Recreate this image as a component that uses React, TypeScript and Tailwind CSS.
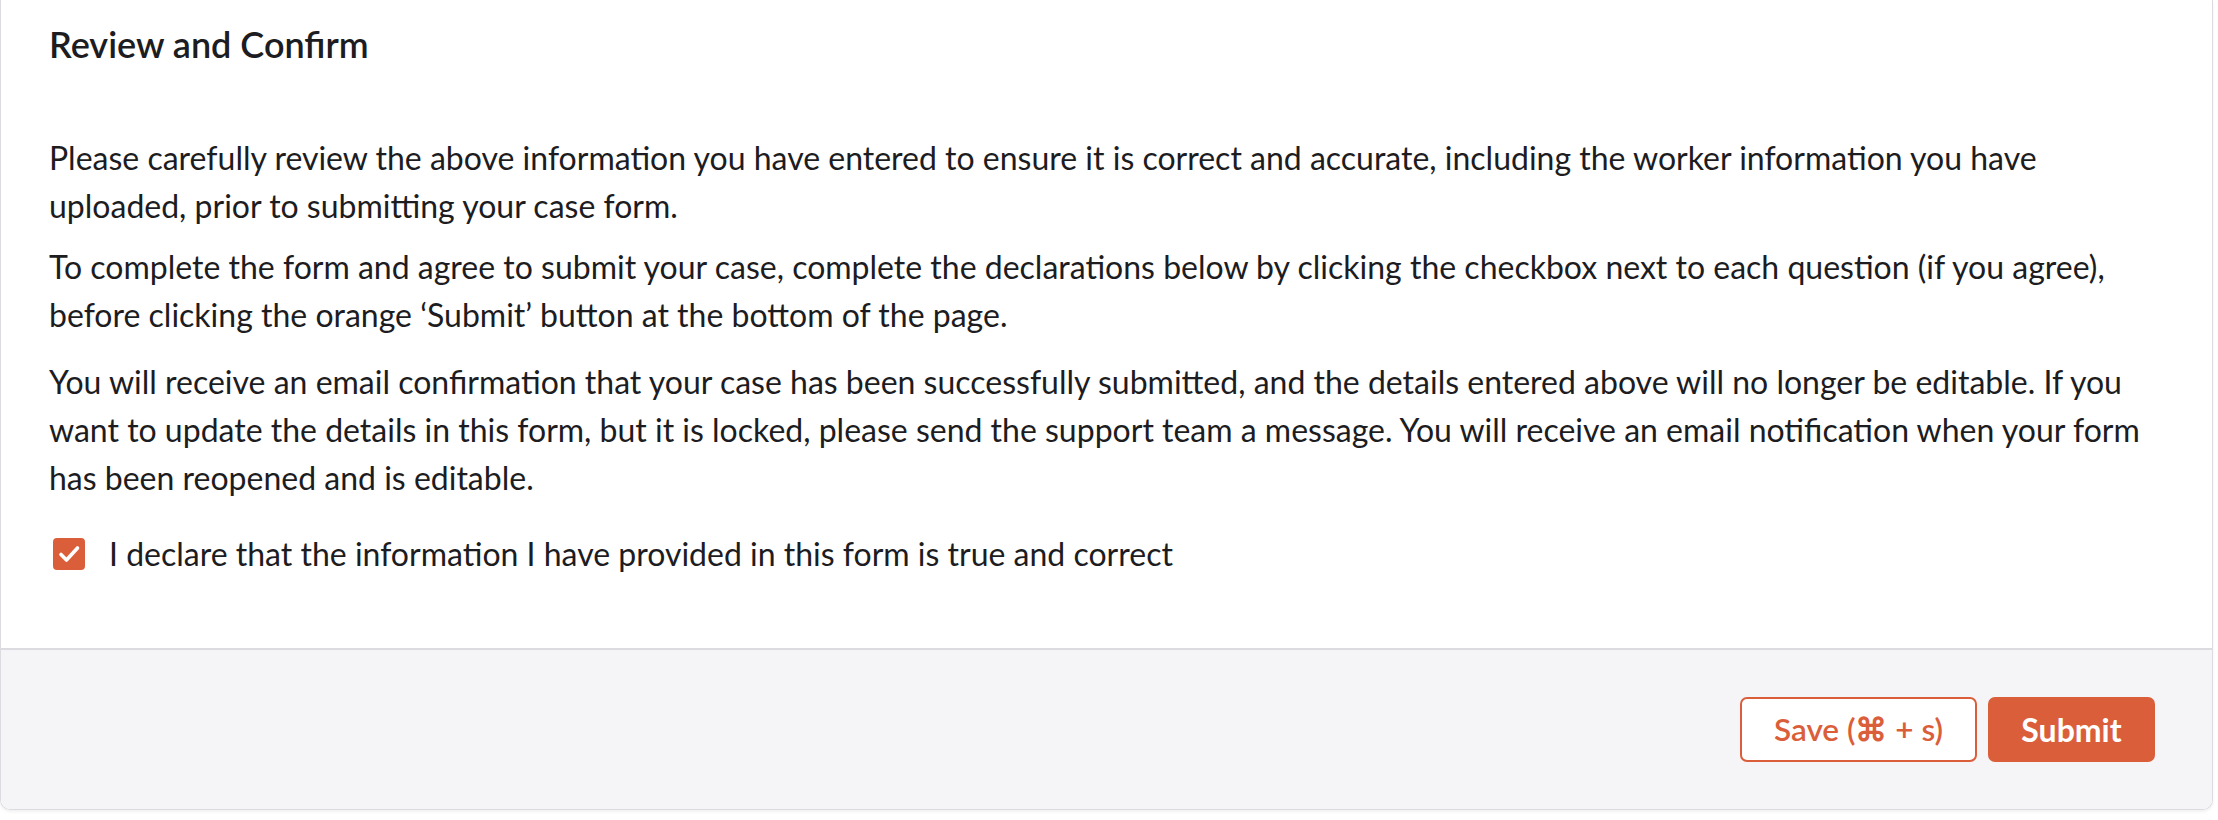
import React, { useState } from 'react';

export default function App() {
  const [agreed, setAgreed] = useState(true);

  return (
    <div className="min-h-screen bg-white font-['Lato','Noto_Sans',sans-serif] text-[#1c1c21]">
      <div className="w-[2213px] border-x border-b border-[#dcdce0] rounded-b-[10px] overflow-hidden shadow-[0_2px_3px_rgba(0,0,0,0.06)]">
        {/* Body */}
        <div className="px-12 pt-[22px] pb-[70px]">
          <h2 className="text-[36px] leading-[44px] font-semibold">Review and Confirm</h2>

          <div className="mt-[68px] text-[32px] leading-[48px]">
            <p>
              Please carefully review the above information you have entered to ensure it is correct and accurate,
              including the worker information you have uploaded, prior to submitting your case form.
            </p>
            <p className="mt-[13px]">
              To complete the form and agree to submit your case, complete the declarations below by clicking the
              checkbox next to each question (if you agree), before clicking the orange ‘Submit’ button at the bottom
              of the page.
            </p>
            <p className="mt-[19px]">
              You will receive an email confirmation that your case has been successfully submitted, and the details
              entered above will no longer be editable. If you want to update the details in this form, but it is
              locked, please send the support team a message. You will receive an email notification when your form
              has been reopened and is editable.
            </p>
          </div>

          <label className="mt-[28px] flex items-center gap-[24px] cursor-pointer">
            <button
              type="button"
              onClick={() => setAgreed(!agreed)}
              className={
                agreed
                  ? 'ml-[4px] w-[32px] h-[32px] shrink-0 rounded-[4px] bg-[#db5e3b] flex items-center justify-center'
                  : 'ml-[4px] w-[32px] h-[32px] shrink-0 rounded-[4px] border-2 border-[#b8b8bf] bg-white'
              }
            >
              {agreed && (
                <svg width="32" height="32" viewBox="0 0 32 32" fill="none">
                  <path d="M8 16.5l5.5 5.5L24.5 10" stroke="white" strokeWidth="3.6" strokeLinecap="round" strokeLinejoin="round" />
                </svg>
              )}
            </button>
            <span className="text-[32px] leading-[48px]">
              I declare that the information I have provided in this form is true and correct
            </span>
          </label>
        </div>

        {/* Footer */}
        <div className="border-t-2 border-[#dcdce0] bg-[#f5f5f7] flex justify-end gap-[11px] pt-[47px] pb-[47px] pr-[57px]">
          <button className="h-[65px] w-[237px] rounded-[7px] border-2 border-[#db5e3b] bg-white text-[#db5e3b] text-[31.5px] font-semibold">
            Save (⌘ + s)
          </button>
          <button className="h-[65px] w-[167px] rounded-[7px] bg-[#db5e3b] text-white text-[32px] font-bold">
            Submit
          </button>
        </div>
      </div>
    </div>
  );
}
